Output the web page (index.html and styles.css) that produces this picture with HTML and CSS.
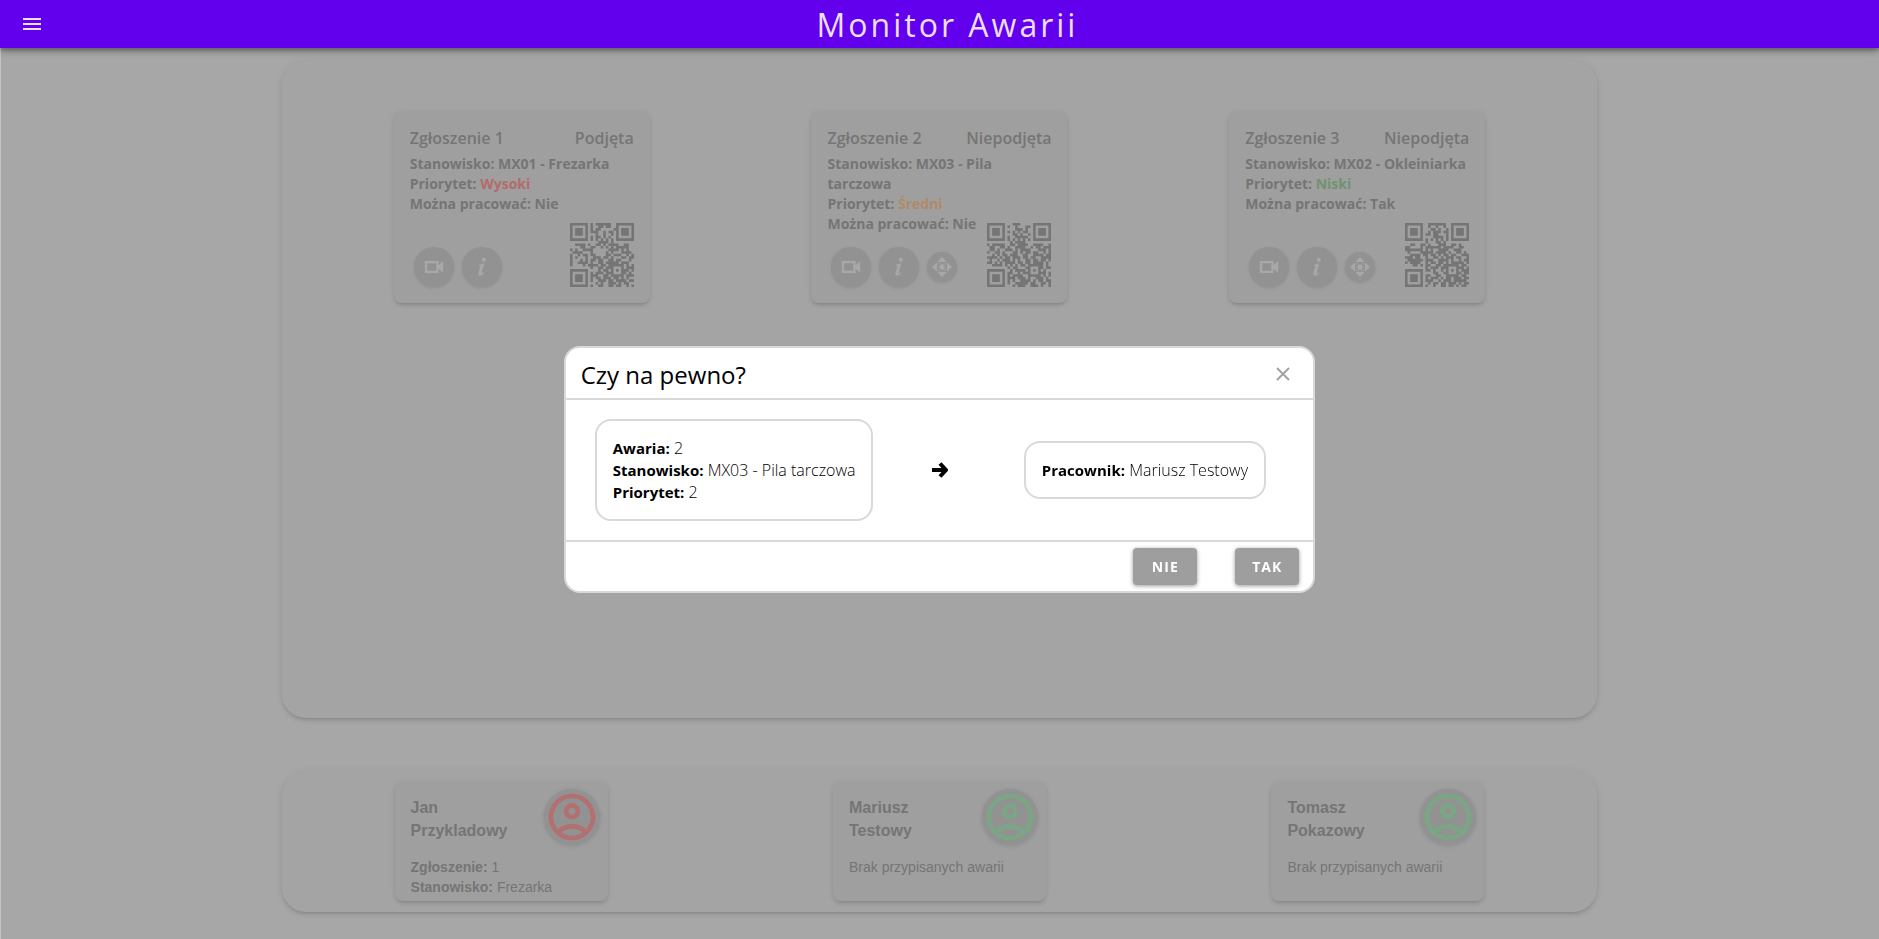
FILE: index.html
```html
<!DOCTYPE html>
<html lang="pl">
<head>
<meta charset="utf-8">
<title>Monitor Awarii</title>
<link rel="stylesheet" href="styles.css">
</head>
<body>
<svg class="sprite" aria-hidden="true">
  <symbol id="i-cam" viewBox="0 0 24 24"><path fill-rule="evenodd" d="M2 5.500h15v4.500l5-4.500v13l-5-4.500v4.500H2zM4.500 8v8h10V8z"/></symbol>
  <symbol id="i-info" viewBox="0 0 24 24"><circle cx="14" cy="4" r="2.200"/><path d="M8.300 9.700c2-.3 3.800-.9 5.600-1.800l.5.300-2.700 9.800c-.2.900 0 1.200.4 1.100.6-.1 1.200-.8 1.800-1.600l.7.500c-1.300 2.200-2.900 3.600-4.700 3.600-1.600 0-2.200-1.200-1.700-3l1.900-6.800c.2-.8-.2-1-1.900-1.200z"/></symbol>
  <symbol id="i-move" viewBox="0 0 24 24"><path d="M7 6.500 12 1l5 5.500zM7 17.500 12 23l5-5.500zM6.500 7 1 12l5.500 5zM17.500 7 23 12l-5.500 5z"/><path fill-rule="evenodd" d="M7.500 7.500h9v9h-9zM12 7.600a4.400 4.400 0 1 0 0 8.800 4.400 4.400 0 0 0 0-8.800z" opacity=".6"/><circle cx="12" cy="12" r="2.900"/></symbol>
  <symbol id="i-user" viewBox="0 0 24 24"><path d="M12 2C6.480 2 2 6.480 2 12s4.480 10 10 10 10-4.480 10-10S17.520 2 12 2zM7.350 18.500C8.660 17.560 10.260 17 12 17s3.340.56 4.650 1.500C15.340 19.440 13.740 20 12 20s-3.340-.56-4.650-1.500zm10.790-1.380C16.450 15.800 14.320 15 12 15s-4.450.8-6.140 2.120C4.700 15.730 4 13.950 4 12c0-4.420 3.580-8 8-8s8 3.580 8 8c0 1.950-.7 3.730-1.860 5.120zM12 6c-1.930 0-3.500 1.570-3.500 3.500S10.070 13 12 13s3.500-1.570 3.500-3.500S13.930 6 12 6zm0 5c-.83 0-1.500-.67-1.500-1.500S11.170 8 12 8s1.500.67 1.500 1.500S12.830 11 12 11z"/></symbol>
</svg>

<header class="topbar">
  <button class="menu" type="button" aria-label="Menu"><svg viewBox="0 0 24 24"><path d="M3 18h18v-2H3v2zm0-5h18v-2H3v2zm0-7v2h18V6H3z"/></svg></button>
  <h1 class="brand">Monitor Awarii</h1>
</header>

<main class="page">
  <section class="panel tickets">
    <article class="card ticket">
      <header class="ticket-head"><span>Zgłoszenie 1</span><span>Podjęta</span></header>
      <div class="ticket-text">Stanowisko: MX01 - Frezarka<br>Priorytet: <span class="high">Wysoki</span><br>Można pracować: Nie</div>
      <div class="ticket-foot">
        <button class="round" type="button" aria-label="Wideo"><svg><use href="#i-cam"/></svg></button>
        <button class="round" type="button" aria-label="Informacje"><svg><use href="#i-info"/></svg></button>
        <svg class="qr" viewBox="0 0 25 25" data-code="0"></svg>
      </div>
    </article>
    <article class="card ticket">
      <header class="ticket-head"><span>Zgłoszenie 2</span><span>Niepodjęta</span></header>
      <div class="ticket-text">Stanowisko: MX03 - Pila<br>tarczowa<br>Priorytet: <span class="mid">Średni</span><br>Można pracować: Nie</div>
      <div class="ticket-foot">
        <button class="round" type="button" aria-label="Wideo"><svg><use href="#i-cam"/></svg></button>
        <button class="round" type="button" aria-label="Informacje"><svg><use href="#i-info"/></svg></button>
        <button class="round small" type="button" aria-label="Przenieś"><svg><use href="#i-move"/></svg></button>
        <svg class="qr" viewBox="0 0 25 25" data-code="1"></svg>
      </div>
    </article>
    <article class="card ticket">
      <header class="ticket-head"><span>Zgłoszenie 3</span><span>Niepodjęta</span></header>
      <div class="ticket-text">Stanowisko: MX02 - Okleiniarka<br>Priorytet: <span class="low">Niski</span><br>Można pracować: Tak</div>
      <div class="ticket-foot">
        <button class="round" type="button" aria-label="Wideo"><svg><use href="#i-cam"/></svg></button>
        <button class="round" type="button" aria-label="Informacje"><svg><use href="#i-info"/></svg></button>
        <button class="round small" type="button" aria-label="Przenieś"><svg><use href="#i-move"/></svg></button>
        <svg class="qr" viewBox="0 0 25 25" data-code="2"></svg>
      </div>
    </article>
  </section>

  <section class="panel workers">
    <article class="card worker">
      <div class="worker-head"><h2 class="name">Jan<br>Przykladowy</h2><span class="avatar busy"><svg><use href="#i-user"/></svg></span></div>
      <p class="worker-text"><b>Zgłoszenie:</b> 1<br><b>Stanowisko:</b> Frezarka</p>
    </article>
    <article class="card worker">
      <div class="worker-head"><h2 class="name">Mariusz<br>Testowy</h2><span class="avatar free"><svg><use href="#i-user"/></svg></span></div>
      <p class="worker-text">Brak przypisanych awarii</p>
    </article>
    <article class="card worker">
      <div class="worker-head"><h2 class="name">Tomasz<br>Pokazowy</h2><span class="avatar free"><svg><use href="#i-user"/></svg></span></div>
      <p class="worker-text">Brak przypisanych awarii</p>
    </article>
  </section>
</main>

<div class="overlay">
  <div class="modal" role="dialog" aria-modal="true" aria-labelledby="modal-title">
    <header class="modal-head">
      <h2 class="modal-title" id="modal-title">Czy na pewno?</h2>
      <button class="close" type="button" aria-label="Zamknij"><svg viewBox="0 0 14 14"><path d="M1 1l12 12M13 1 1 13"/></svg></button>
    </header>
    <div class="modal-body">
      <div class="box"><b>Awaria:</b> 2<br><b>Stanowisko:</b> MX03 - Pila tarczowa<br><b>Priorytet:</b> 2</div>
      <svg class="arrow" viewBox="0 0 16 16"><path d="M0 8h13M8 1.500 14 8l-6 6.500"/></svg>
      <div class="box"><b>Pracownik:</b> Mariusz Testowy</div>
    </div>
    <footer class="modal-foot">
      <button class="btn" type="button">NIE</button>
      <button class="btn" type="button">TAK</button>
    </footer>
  </div>
</div>
<script src="qr.js"></script>
</body>
</html>
```

FILE: styles.css
```css
* { box-sizing: border-box; }
body {
  margin: 0;
  min-height: 100vh;
  background: #a7a7a7;
  color: #757575;
  font-family: "Open Sans", "Noto Sans", sans-serif;
}
h1, h2, p { margin: 0; }
button { border: 0; padding: 0; font-family: inherit; }
svg { display: block; fill: currentColor; }
.sprite { display: none; }

.topbar {
  position: relative;
  display: grid;
  grid-template-columns: 48px 1fr 32px;
  align-items: center;
  height: 48px;
  padding: 0 8px;
  background: #6200ee;
  color: #ecdffd;
  box-shadow: 0 2px 4px rgba(0,0,0,.25), 0 4px 6px rgba(0,0,0,.16), 0 1px 10px rgba(0,0,0,.12);
}
.menu { display: grid; place-items: center; width: 48px; height: 48px; background: none; color: inherit; }
.menu svg { width: 24px; height: 24px; }
.brand { padding-top: 2px; font-size: 32px; line-height: 46px; font-weight: 400; letter-spacing: 3px; text-align: center; }

.page {
  display: flex;
  flex-direction: column;
  align-items: center;
  gap: 53px;
  min-height: calc(100vh - 48px);
  padding: 13px 0 16px;
  box-shadow: inset 1px 0 #c4c4c4;
}
.panel {
  display: grid;
  grid-template-columns: repeat(3, 1fr);
  justify-items: center;
  width: 70%;
  background: #a4a4a4;
  border-radius: 24px;
  box-shadow: 0 3px 3px -2px rgba(0,0,0,.1), 0 3px 4px rgba(0,0,0,.07), 0 1px 8px rgba(0,0,0,.06);
}
.tickets { min-height: 70vh; padding: 50px 31px; align-items: start; }
.workers { min-height: 15vh; padding: 10px 0; align-items: start; }
.card {
  background: #9f9f9f;
  border-radius: 8px;
  box-shadow: 0 3px 3px -2px rgba(0,0,0,.1), 0 3px 4px rgba(0,0,0,.07), 0 1px 6px rgba(0,0,0,.05);
}

.ticket {
  display: grid;
  grid-template-rows: 24px 1fr;
  row-gap: 4px;
  width: 256px;
  min-height: 192px;
  padding: 15px 16px 16px;
}
.ticket-head { display: flex; justify-content: space-between; font-size: 16px; line-height: 24px; font-weight: 600; }
.ticket-text { grid-area: 2 / 1; font-size: 14px; line-height: 20px; font-weight: 700; }
.high { color: #b36b6b; }
.mid { color: #b08a66; }
.low { color: #6f936f; }
.ticket-foot { grid-area: 2 / 1; align-self: end; display: flex; align-items: flex-end; gap: 8px; padding-left: 4px; }
.round {
  display: grid;
  place-items: center;
  width: 40px;
  height: 40px;
  border-radius: 50%;
  background: #929292;
  color: #a8a8a8;
  box-shadow: 0 1px 3px rgba(0,0,0,.1);
}
.round svg { width: 22px; height: 22px; }
.round.small { width: 30px; height: 30px; margin-bottom: 5px; }
.qr { width: 64px; height: 64px; margin-left: auto; color: #757575; }

.worker {
  width: 213px;
  min-height: 120px;
  padding: 8px 8px 4px 16px;
  font-family: "Liberation Sans", sans-serif;
}
.worker-head { display: flex; justify-content: space-between; }
.name { padding-top: 7px; font-size: 16px; line-height: 23px; font-weight: 700; }
.avatar { display: grid; place-items: center; width: 56px; height: 56px; border-radius: 50%; background: #929292; box-shadow: 0 1px 4px rgba(0,0,0,.12); }
.avatar svg { width: 56px; height: 56px; }
.busy { color: #b37070; }
.free { color: #7ba585; }
.worker-text { margin-top: 12px; font-size: 14px; line-height: 20px; }

.overlay { position: fixed; inset: 0; display: flex; align-items: center; justify-content: center; }
.modal {
  width: 40%;
  background: #fff;
  color: #000;
  border: 2px solid #d9d9d9;
  border-radius: 16px;
}
.modal-head { display: flex; align-items: center; justify-content: space-between; height: 52px; padding: 4px 23px 0 15px; border-bottom: 2px solid #d9d9d9; }
.modal-title { font-size: 24px; line-height: 32px; font-weight: 500; }
.close { background: none; color: #a3a3a3; margin-bottom: 2px; }
.close svg { width: 14px; height: 14px; fill: none; stroke: currentColor; stroke-width: 2; }
.modal-body { display: grid; grid-template-columns: 1fr 132px 1fr; align-items: center; justify-items: center; padding: 19px 29px; }
.box { padding: 16px; border: 2px solid #d9d9d9; border-radius: 16px; font-size: 16px; line-height: 22px; font-weight: 300; white-space: nowrap; }
.box b { font-size: 15px; font-weight: 700; }
.arrow { width: 16px; height: 16px; fill: none; stroke: #000; stroke-width: 4; }
.modal-foot { display: flex; justify-content: flex-end; gap: 38px; padding: 6px 14px 6px 15px; border-top: 2px solid #d9d9d9; }
.btn {
  width: 64px;
  height: 37px;
  border-radius: 4px;
  background: #9e9e9e;
  color: #fff;
  font-size: 14px;
  font-weight: 700;
  letter-spacing: 1px;
  box-shadow: 0 1px 4px rgba(0,0,0,.4);
}
```

FILE: qr.js
```js
// Module rows of each ticket code; the three finder squares are added when drawn.
const codes = [
  [
    "........#.######.........",
    "........#..##.##.........",
    "........#.##.....#.......",
    "........###..#.##........",
    "..........#..#..#........",
    "........#.##.#.#.........",
    "........#.#.#.#.#........",
    "...........####.#........",
    "..####.#..##.#.####..##..",
    "....##..##..#.#.#.#####..",
    "#.#..####......####.#.#..",
    ".####...#.....#.#...####.",
    "#..#.##.##....##.###..#.#",
    "#.#...#..###.##.#...##.##",
    "#...#.#.##.##..##.##...#.",
    "#..####.#..##.#####.###..",
    "#....#.####.##.######.#.#",
    "........#..##.###...#.###",
    "...........#.##.#.#.###.#",
    "........#.###.###...##.#.",
    "........###..##.#####.###",
    "........#.##.###.##.#.#..",
    "........#..###.##.####.##",
    "..........#.#..###.#.##..",
    "........#..##..##.##..#.#"
  ],
  [
    "..........###............",
    "........#..#...##........",
    "...........###.#.........",
    "........#.#.#.##.........",
    "..........##.#..#........",
    "........#..#####.........",
    "........#.#.#.#.#........",
    ".........#.####..........",
    "#.#####..##.####..####..#",
    ".##..##.#..####..#.##.###",
    ".##.#..###.#.####...###.#",
    "#..##.#...##.#.##.##..#.#",
    "..#.#.##.###..##..####.##",
    "####.#.##.###.##.##..####",
    ".#..#.###.#.#..##.##.##.#",
    "##.#.#.####.##.##.####.#.",
    "..####.#.#.#.##.######.#.",
    "........#.##...##...##.##",
    ".........#.####.#.#.#.#..",
    "........##..#.###...###.#",
    "........#.####..#####.#.#",
    "........###.###.#..###.#.",
    "........#.#..####.#.##.##",
    "........#..#####.##..##.#",
    "..........#.###..###.#..#"
  ],
  [
    ".........#######.........",
    ".........#..#..#.........",
    "..........##.#..#........",
    ".........#.###.##........",
    "........##.##...#........",
    "...........####.#........",
    "........#.#.#.#.#........",
    "........#...##.#.........",
    "..##..##.#...###..##.#...",
    "##....#.######.####..##..",
    "#######.#.#..####..###...",
    ".#....#####.####.#..##.#.",
    "..####.##.##.#.##.##..###",
    "###.##..#..##.#.###.##..#",
    ".######.###..####.#..#.##",
    "#.####..#.##.##.#.#####.#",
    "...##.#.##..##.######.##.",
    "........#.###.###...###.#",
    "........##.#..#.#.#.#.###",
    "...........##..##...##.##",
    "........##..##..#####.##.",
    "........#.###.#.##.###.##",
    "........###..#.###.#####.",
    ".........#.##.##.###.#.##",
    "........#..#..##.##.#.##."
  ]
];

document.querySelectorAll(".qr").forEach(function (svg) {
  let d = "";
  codes[Number(svg.dataset.code)].forEach(function (row, y) {
    // Adjacent modules are joined into one run so that no seam shows between them.
    for (const run of row.matchAll(/#+/g)) {
      const w = run[0].length;
      d += "M" + run.index + " " + y + "h" + w + "v1h-" + w + "z";
    }
  });
  [[0, 0], [18, 0], [0, 18]].forEach(function (p) {
    d += "M" + p[0] + " " + p[1] + "h7v7h-7zM" + (p[0] + 1) + " " + (p[1] + 1) + "v5h5v-5zM" + (p[0] + 2) + " " + (p[1] + 2) + "h3v3h-3z";
  });
  const path = document.createElementNS("http://www.w3.org/2000/svg", "path");
  path.setAttribute("d", d);
  svg.appendChild(path);
});
```
